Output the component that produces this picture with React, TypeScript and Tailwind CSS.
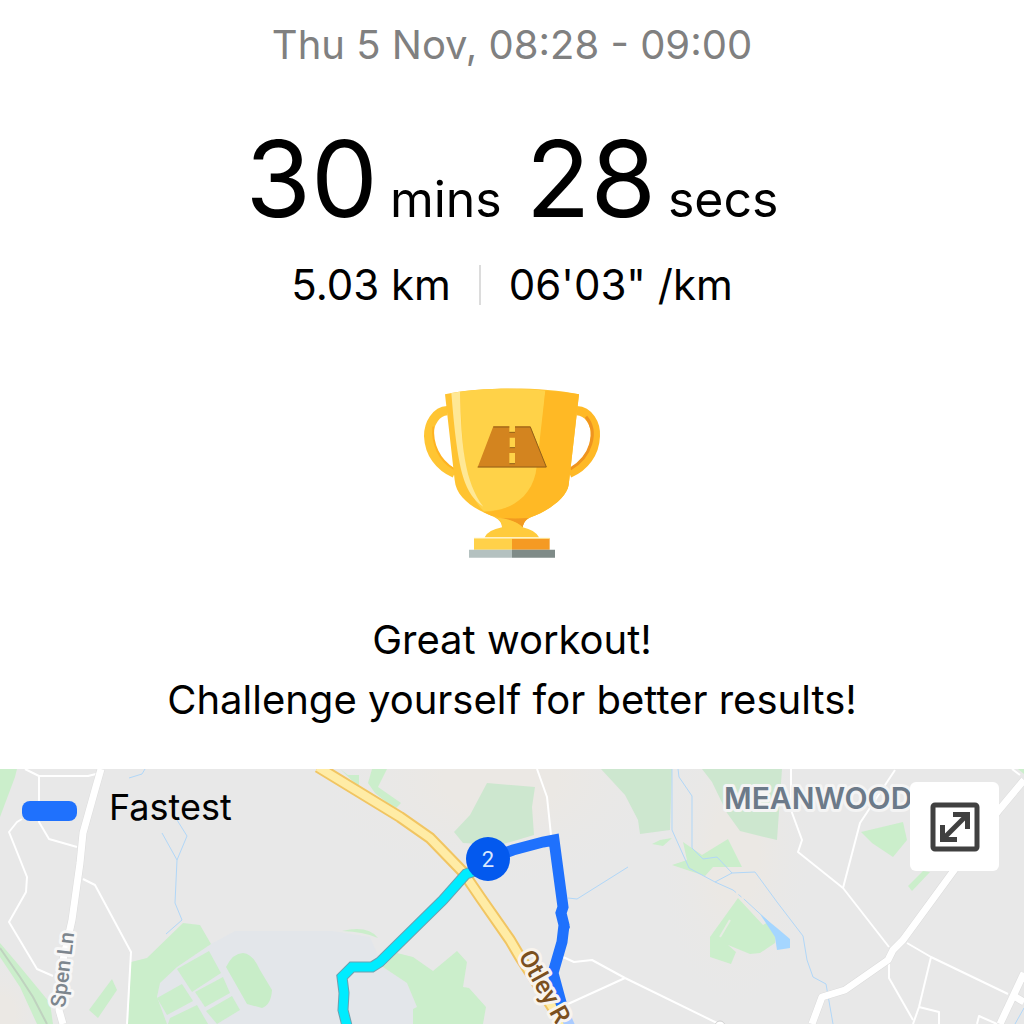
import type { ReactNode } from 'react';

function Trophy() {
  return (
    <svg viewBox="6 0 660 600" className="mt-[55px] h-[200px] w-[220px]" role="img" aria-label="Trophy">
      <path
        d="M142 122C108 124 86 160 86 198C88 250 118 290 164 310"
        fill="none"
        stroke="#ffc533"
        strokeWidth="28"
      />
      <path d="M100 170C95 220 116 270 162 297" fill="none" stroke="#ffb321" strokeWidth="6" />
      <path
        d="M530 122C566 124 588 160 586 198C584 250 554 290 508 310"
        fill="none"
        stroke="#ffb926"
        strokeWidth="28"
      />
      <path d="M558 140C596 185 574 260 511 297" fill="none" stroke="#ef941f" strokeWidth="9" />
      <path
        d="M135 73C240 50 430 50 537 73L506 345C500 385 440 425 394 441C374 449 370 460 368 472L306 472C306 456 294 446 276 438C220 416 168 382 164 330Z"
        fill="#ffc331"
      />
      <path d="M180 65C270 54 350 54 436 62L415 290C408 375 352 420 252 424C205 374 190 320 180 65Z" fill="#ffd248" />
      <path
        d="M436 62Q490 64 537 73L506 345C500 385 440 425 394 441C374 449 370 460 368 472C344 452 310 444 276 438L250 426C340 424 402 372 410 290Z"
        fill="#ffb925"
      />
      <path d="M154 69L180 65C184 230 194 335 250 410C190 368 173 300 154 69Z" fill="#ffe895" />
      <path d="M290 443Q340 447 386 444Q370 454 368 474Q354 452 290 443Z" fill="#f29a20" />
      <path d="M290 443Q344 447 368 472Q405 480 417 502H254Q264 480 306 472Q307 452 290 443Z" fill="#ffcb3c" />
      <path d="M222 505H336V539H222Z" fill="#ffd149" />
      <path d="M336 505H449V539H336Z" fill="#f59a23" />
      <path d="M222 505H449" stroke="#ffe692" strokeWidth="3" />
      <path d="M207 539H336V563H207Z" fill="#b4c1c0" />
      <path d="M336 539H465V563H336Z" fill="#7f8b88" />
      <path
        d="M280 169H328V187H345V169H391L439 292H233ZM329 203V233H345V203ZM328 249V281H345V249Z"
        fill="#d3841f"
        fillRule="evenodd"
      />
      <path d="M280 171H328M345 171H391L439 291H233M328 187H345M329 233H345M328 281H345" fill="none" stroke="#926018" strokeWidth="3" />
    </svg>
  );
}

function MapLabel({ children, ...rest }: { children: ReactNode; [attr: string]: unknown }) {
  return (
    <text fontFamily="Roboto, sans-serif" strokeLinejoin="round" paintOrder="stroke" {...rest}>
      {children}
    </text>
  );
}

const parks = [
  '0,0 17,0 15,8 0,48',
  '131,193 147,189 183,154 200,156 211,175 177,198 160,214 157,228 167,255 128,255',
  '177,200 209,182 221,204 192,223',
  '157,229 182,215 193,232 167,246',
  '195,223 223,208 230,224 205,238',
  '170,249 197,236 208,255 168,255',
  '206,242 232,227 240,241 217,255',
  '89,241 112,210 117,221 98,249',
  '0,174 17,194 50,234 53,255 37,255 20,218 0,188',
  '340,0 348,6 359,6 359,18',
  '372,0 387,0 378,18 401,34 395,40 375,24 368,14',
  '397,184 413,188 433,202 457,182 467,193 463,218 469,219 486,238 483,255 413,255 413,240 417,238 407,214 383,198',
  '652,75 660,71 672,69 663,77',
  '683,73 702,86 728,70 742,98 713,98 705,107 672,96 687,91',
  '738,129 763,156 768,153 776,161 775,174 760,184 750,185 728,176 736,183 731,195 710,188 710,168',
  '861,63 903,53 907,71 893,88 872,74',
  '908,117 923,102 930,103 912,122',
  '1018,0 1024,0 1024,5',
];

const woods = [
  '487,14 535,18 532,38 534,66 500,76 463,74 454,63 470,46',
  '601,0 672,0 670,61 640,65 638,51 625,26',
  '702,0 782,0 777,71 760,67 740,62 727,44 712,13',
];

const streams = [
  '129,9 142,5 145,0',
  '177,51 187,67 177,91 175,134 182,151 166,165',
  '162,64 177,91',
  '568,129 577,130 628,98',
  '672,0 672,61 689,99 715,113 733,121',
  '745,131 770,154',
  '678,0 679,8 692,27 692,79 703,90 717,88 732,104 755,103 777,133 803,167 807,191 813,208 826,215 833,255',
  '715,113 732,104',
  '1015,255 1024,239',
];

const lanes = [
  '25,0 39,7 88,7 96,5',
  '39,7 39,53 49,70 77,78',
  '22,50 17,53 9,63 27,108 26,123 9,153 37,200 53,207',
  '83,110 95,116 131,183 127,255',
  '537,0 547,28 551,66',
  '563,188 574,193 592,191 625,209 717,254',
  '568,235 625,209',
  '791,0 791,41 802,71 798,83 843,119 889,178',
  '895,1 860,54 843,119',
  '1012,0 1020,6',
  '907,174 931,188 1008,225',
  '931,188 919,238 913,255',
  '889,193 889,209 913,251',
  '919,238 939,243 939,255',
  '977,255 979,247 997,255',
];

const roads = [
  '101,0 95,21 83,64 80,94 72,151 63,191 59,241 63,255',
  '1024,11 999,41 952,104 903,171 893,181 888,191 845,221 822,228 812,255',
  '1024,204 1000,255',
  '1012,226 1024,233',
];

const otleyRoad = '318,-2 400,48 430,69 463,103 480,128 510,171 520,188 533,208 563,255';
const cyanRoute = '484,99 466,105 443,131 380,193 372,198 352,198 342,208 344,224 343,241 347,257';
const blueRoute = '488,90 513,81 543,73 554,71 563,138 561,144 564,156 562,173 553,204 563,241';

function RouteMap() {
  return (
    <svg
      viewBox="0 0 1024 255"
      preserveAspectRatio="xMidYMid slice"
      className="absolute inset-0 h-full w-full"
      role="img"
      aria-label="Route map"
    >
      <defs>
        <radialGradient id="built">
          <stop offset="0.3" stopColor="#ebe8e4" />
          <stop offset="1" stopColor="#e8e8e8" stopOpacity="0" />
        </radialGradient>
      </defs>
      <rect width="1024" height="255" fill="#e8e8e8" />
      <ellipse cx="500" cy="10" rx="190" ry="115" fill="url(#built)" />
      <ellipse cx="735" cy="85" rx="80" ry="160" fill="url(#built)" />
      <ellipse cx="0" cy="245" rx="50" ry="60" fill="url(#built)" />
      <path d="M211 175L235 162L333 162L370 168L383 198L407 214L417 238L413 255H167L157 228L160 214L177 198Z" fill="#e3e6ea" />
      {parks.map((points) => (
        <polygon key={points} points={points} fill="#cbeecb" />
      ))}
      <path d="M226 198Q233 184 243 184Q253 185 260 201L272 221Q271 236 262 239L247 235Z" fill="#c8edc8" />
      <path d="M342 162Q368 156 378 169Q365 163 342 162Z" fill="#cbeecb" />
      {woods.map((points) => (
        <polygon key={points} points={points} fill="#cde7cf" />
      ))}
      <path d="M720 168L730 151" stroke="#e6ebe3" strokeWidth="2" />
      <path d="M0 179L20 208L33 228L47 255" fill="none" stroke="#bfd2bf" strokeWidth="2" />
      {streams.map((points) => (
        <polyline key={points} points={points} fill="none" stroke="#b1d7f8" strokeWidth="1" />
      ))}
      <path d="M733 121L745 131" stroke="#b1d7f8" strokeDasharray="4 3" />
      <path d="M760 145L777 159L790 170V179L777 181L775 168Z" fill="#a5d6ff" />
      <g fill="none" strokeLinejoin="round">
        {lanes.map((points) => (
          <polyline key={points} points={points} stroke="#fff" strokeWidth="2" />
        ))}
        {roads.map((points) => (
          <polyline key={points} points={points} stroke="#dcdcdc" strokeWidth="8" />
        ))}
        {roads.map((points) => (
          <polyline key={points} points={points} stroke="#fff" strokeWidth="7" />
        ))}
        <circle cx="720" cy="257" r="5" fill="#fff" stroke="#cfcfcf" />
        <polyline points={otleyRoad} stroke="#f1c562" strokeWidth="12" />
        <polyline points={otleyRoad} stroke="#ffeca6" strokeWidth="8" />
      </g>
      <g fill="none">
        <polyline points={cyanRoute} stroke="#6f9fae" strokeWidth="11" />
        <polyline points={cyanRoute} stroke="#00ecff" strokeWidth="9" />
        <polyline points={blueRoute} stroke="#1f71fd" strokeWidth="11" />
        <path d="M561 144L570 158L562 175Z" fill="#1f71fd" />
        <path d="M563 241L570 257" stroke="#a9cbff" strokeWidth="10" />
      </g>

      <MapLabel transform="translate(65 239) rotate(-83)" fontSize="21" fontWeight="500" fill="#7d868e" stroke="#f7f7f7" strokeWidth="6">
        Spen Ln
      </MapLabel>
      <MapLabel transform="translate(518 187) rotate(61)" fontSize="25" fontWeight="500" fill="#7b501f" stroke="#f8f4ee" strokeWidth="6">
        Otley R
      </MapLabel>
      <MapLabel
        x="724"
        y="40"
        fontFamily="Inter, sans-serif"
        fontSize="30"
        fontWeight="600"
        fill="#6c7a89"
        stroke="#f4f4f4"
        strokeWidth="6"
      >
        MEANWOOD
      </MapLabel>

      <circle cx="488" cy="90" r="22" fill="#0359ee" />
      <MapLabel x="488" y="98" fontSize="22" textAnchor="middle" fill="#d9e8ff">
        2
      </MapLabel>
    </svg>
  );
}

function ExpandIcon() {
  return (
    <svg viewBox="0 0 50 50" className="size-[50px]" fill="none" stroke="#404040" aria-hidden="true">
      <rect x="3" y="3" width="44" height="44" rx="2" strokeWidth="5" />
      <path d="M13 37L37 13" strokeWidth="5" />
      <path d="M23 12.500H37.500V27M12.500 23V37.500H27" strokeWidth="5" />
    </svg>
  );
}

export default function App() {
  return (
    <main className="flex min-h-screen w-full flex-col bg-white font-['Inter',sans-serif] text-black">
      <header className="flex flex-col items-center pt-[15px] text-center leading-[60px]">
        <time className="text-[40px] text-[#808080]">Thu 5 Nov, 08:28 - 09:00</time>
        <h1 className="mt-11 flex items-baseline text-[50px] leading-none">
          <span className="text-[106px] leading-[120px]">30</span>
          <span className="ml-3">mins</span>
          <span className="ml-6 text-[106px] leading-[120px]">28</span>
          <span className="ml-3">secs</span>
        </h1>
        <div className="mt-4 flex items-center text-[42px]">
          <span>5.03 km</span>
          <span className="mx-7 h-10 w-0.5 bg-[#dcdcdc]" />
          <span>06'03" /km</span>
        </div>
      </header>

      <section className="flex flex-col items-center pb-[39px] text-center text-[40px] leading-[60px]">
        <Trophy />
        <p className="mt-10">Great workout!</p>
        <p>Challenge yourself for better results!</p>
      </section>

      <section className="relative min-h-[255px] flex-1 overflow-hidden">
        <RouteMap />
        <div className="relative flex items-start justify-between pt-[13px] pr-[25px] pl-[22px]">
          <div className="flex items-center text-[36px] leading-[50px]">
            <span className="mt-2 mr-8 h-5 w-[55px] rounded-lg bg-[#1f71fd]" />
            <span>Fastest</span>
          </div>
          <button
            type="button"
            aria-label="Expand map"
            className="flex size-[89px] items-center justify-center rounded-md bg-white"
          >
            <ExpandIcon />
          </button>
        </div>
      </section>
    </main>
  );
}
